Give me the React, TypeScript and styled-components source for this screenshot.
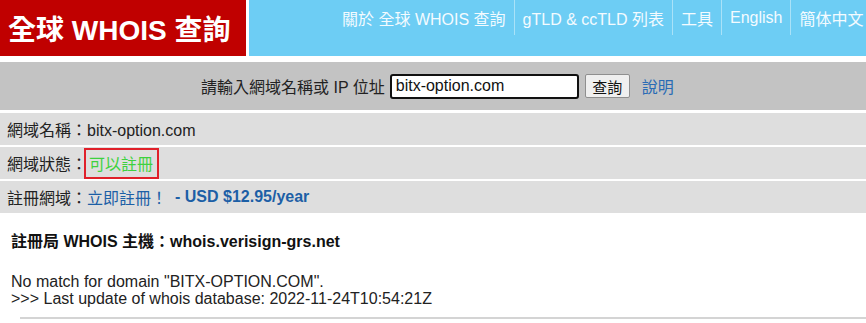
import React from "react";
import styled, { createGlobalStyle } from "styled-components";

const Global = createGlobalStyle`
  html, body { margin: 0; padding: 0; background: #fff; overflow: hidden; }
  body { font-family: "Liberation Sans", Arial, "Noto Sans CJK TC", sans-serif; font-size: 16px; color: #222; }
`;

const Page = styled.div`
  width: 866px;
  overflow: hidden;
`;

const Header = styled.header`
  display: flex;
  height: 56px;
  gap: 3px;
`;

const Logo = styled.div`
  flex: 0 0 246px;
  background: #c00000;
  color: #fff;
  font-weight: bold;
  font-size: 28px;
  display: flex;
  align-items: center;
  padding-left: 8px;
  box-sizing: border-box;
  white-space: nowrap;
`;

const Nav = styled.nav`
  flex: 1;
  background: #6dcdf4;
  display: flex;
  align-items: flex-start;
  padding-left: 85px;
  overflow: hidden;
  white-space: nowrap;
`;

const NavItem = styled.a<{ $first?: boolean }>`
  color: #f4fbff;
  font-size: 16px;
  text-decoration: none;
  height: 35px;
  display: flex;
  align-items: center;
  padding: 0 8px;
  border-left: ${(p) => (p.$first ? "none" : "1px solid #a9e2f8")};
  flex-shrink: 0;
`;

const SearchBar = styled.form`
  margin-top: 6px;
  height: 48px;
  background: #c3c3c3;
  display: flex;
  align-items: center;
  padding-left: 201px;
`;

const Label = styled.span`
  color: #222;
  margin-right: 5px;
`;

const Input = styled.div`
  width: 189px;
  height: 25px;
  box-sizing: border-box;
  border: 2px solid #111;
  border-radius: 3px;
  background: #fff;
  display: flex;
  align-items: center;
  padding-left: 4px;
  color: #111;
`;

const Button = styled.div`
  margin-left: 6px;
  width: 45px;
  height: 24px;
  box-sizing: border-box;
  border: 1px solid #8f8f8f;
  border-radius: 2px;
  background: #efefef;
  display: flex;
  align-items: center;
  justify-content: center;
  font-size: 15px;
  color: #111;
`;

const HelpLink = styled.a`
  margin-left: 12px;
  color: #2a6bb5;
  text-decoration: none;
`;

const Rows = styled.div`
  display: flex;
  flex-direction: column;
  gap: 2px;
  margin-top: 3px;
`;

const Row = styled.div`
  height: 32px;
  background: #dedede;
  display: flex;
  align-items: center;
  padding-left: 7px;
  color: #222;
`;

const Highlight = styled.span`
  display: inline-flex;
  align-items: center;
  height: 31px;
  box-sizing: border-box;
  border: 2px solid #e0202a;
  padding: 0 4px 0 3px;
  margin-left: -3px;
  color: #3ed13e;
`;

const BlueLink = styled.a`
  color: #1c5fa6;
  text-decoration: none;
`;

const Price = styled.b`
  color: #1c5fa6;
  margin-left: 8px;
`;

const Content = styled.section`
  padding: 20px 0 0 11px;
`;

const Server = styled.div`
  font-weight: bold;
  color: #111;
  height: 18px;
  line-height: 18px;
`;

const Raw = styled.pre`
  margin: 22px 0 0 0;
  font-family: inherit;
  font-size: 16px;
  line-height: 17px;
  color: #222;
`;

const Rule = styled.hr`
  margin: 10px 0 0 9px;
  border: none;
  height: 2px;
  background: #d4d4d4;
`;

export default function App() {
  return (
    <Page>
      <Global />
      <Header>
        <Logo>全球 WHOIS 查詢</Logo>
        <Nav>
          <NavItem $first>關於 全球 WHOIS 查詢</NavItem>
          <NavItem>gTLD &amp; ccTLD 列表</NavItem>
          <NavItem>工具</NavItem>
          <NavItem>English</NavItem>
          <NavItem>簡体中文</NavItem>
        </Nav>
      </Header>
      <SearchBar>
        <Label>請輸入網域名稱或 IP 位址</Label>
        <Input>bitx-option.com</Input>
        <Button>查詢</Button>
        <HelpLink>說明</HelpLink>
      </SearchBar>
      <Rows>
        <Row>網域名稱：bitx-option.com</Row>
        <Row>
          網域狀態：<Highlight>可以註冊</Highlight>
        </Row>
        <Row>
          註冊網域：<BlueLink>立即註冊！</BlueLink>
          <Price>- USD $12.95/year</Price>
        </Row>
      </Rows>
      <Content>
        <Server>註冊局 WHOIS 主機：whois.verisign-grs.net</Server>
        <Raw>{`No match for domain "BITX-OPTION.COM".
>>> Last update of whois database: 2022-11-24T10:54:21Z`}</Raw>
        <Rule />
      </Content>
    </Page>
  );
}
